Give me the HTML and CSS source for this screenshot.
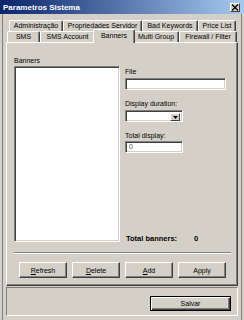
FILE: index.html
```html
<!DOCTYPE html>
<html>
<head>
    <title>Parametros Sistema</title>
    <link rel="stylesheet" href="styles.css">
</head>
<body>
    <div class="titlebar">
        <span class="title">Parametros Sistema</span>
        <span class="close">
            <svg width="8" height="7" viewBox="0 0 8 7"><path d="M1 0.5 L7 6.5 M7 0.5 L1 6.5" stroke="#000" stroke-width="1.3"/></svg>
        </span>
    </div>
    <div class="frame">
        <div class="tabrow back">
            <div class="tab" style="width:54px">Administração</div>
            <div class="tab" style="width:79px">Propriedades Servidor</div>
            <div class="tab" style="width:56px">Bad Keywords</div>
            <div class="tab" style="width:38px">Price List</div>
        </div>
        <div class="tabrow front">
            <div class="tab" style="width:33px">SMS</div>
            <div class="tab" style="width:55px">SMS Account</div>
            <div class="tab selected" style="width:42px">Banners</div>
            <div class="tab" style="width:46px">Multi Group</div>
            <div class="tab" style="width:58px">Firewall / Filter</div>
        </div>
        <div class="panel">
            <div class="panel-main">
                <div class="left-col">
                    <div class="lbl">Banners</div>
                    <div class="listbox"></div>
                </div>
                <div class="right-col">
                    <div class="lbl">File</div>
                    <div class="field wide"></div>
                    <div class="lbl gap">Display duration:</div>
                    <div class="combo">
                        <div class="combo-btn">
                            <svg width="5" height="3" viewBox="0 0 5 3"><path d="M0 0 H5 L2.5 3 Z" fill="#000"/></svg>
                        </div>
                    </div>
                    <div class="lbl gap">Total display:</div>
                    <div class="field short">0</div>
                    <div class="total">
                        <span class="total-lbl">Total banners:</span>
                        <span>0</span>
                    </div>
                </div>
            </div>
            <div class="separator"></div>
            <div class="buttons">
                <button><u>R</u>efresh</button>
                <button><u>D</u>elete</button>
                <button><u>A</u>dd</button>
                <button>Apply</button>
            </div>
        </div>
        <div class="footer">
            <button class="default">Salvar</button>
        </div>
    </div>
</body>
</html>
```

FILE: styles.css
```css
* {
    box-sizing: border-box;
}
body {
    margin: 0;
    width: 244px;
    height: 320px;
    overflow: hidden;
    background-color: #d4d0c8;
    font-family: "Liberation Sans", Arial, sans-serif;
    font-size: 7px;
    color: #000;
}

.titlebar {
    height: 14px;
    display: flex;
    align-items: center;
    justify-content: space-between;
    padding: 0 4px 0 3px;
    background: linear-gradient(to right, #0a246a, #a6caf0);
}
.title {
    color: #fff;
    font-weight: bold;
    font-size: 8px;
}
.close {
    display: flex;
    align-items: center;
    justify-content: center;
    width: 10px;
    height: 9px;
    background-color: #d4d0c8;
    border: 1px solid;
    border-color: #fff #404040 #404040 #fff;
}

.frame {
    margin: 0 2px;
    height: 306px;
    border-left: 1px solid #808080;
    border-right: 1px solid #808080;
    padding: 6px 3px 0 3px;
}

.tabrow {
    display: flex;
    align-items: flex-start;
    height: 11px;
}
.tabrow.back {
    padding-left: 3px;
}
.tabrow.front {
    padding-left: 1px;
}
.tab {
    height: 11px;
    line-height: 10px;
    text-align: center;
    white-space: nowrap;
    border-top: 1px solid #fff;
    border-left: 1px solid #fff;
    border-right: 1px solid #404040;
    border-radius: 2px 2px 0 0;
    box-shadow: inset -1px 0 #808080;
    background-color: #d4d0c8;
}
.tab.selected {
    position: relative;
    z-index: 1;
    height: 14px;
    margin: -2px -2px -1px -2px;
    line-height: 12px;
}

.panel {
    height: 244px;
    border: 1px solid;
    border-color: #fff #404040 #404040 #fff;
    box-shadow: inset -1px -1px #808080;
    padding: 13px 6px 7px 7px;
}
.panel-main {
    display: grid;
    grid-template-columns: 106px 1fr;
    gap: 5px;
}
.lbl {
    line-height: 10px;
    white-space: nowrap;
}
.lbl.gap {
    margin-top: 9px;
}
.listbox {
    height: 176px;
    background-color: #fff;
    border: 1px solid;
    border-color: #808080 #fff #fff #808080;
    box-shadow: inset 1px 1px #404040, inset -1px -1px #d4d0c8;
}
.right-col {
    display: flex;
    flex-direction: column;
    align-items: flex-start;
    padding-top: 11px;
}
.field, .combo {
    height: 12px;
    margin-top: 1px;
    background-color: #fff;
    border: 1px solid;
    border-color: #808080 #fff #fff #808080;
    box-shadow: inset 1px 1px #404040, inset -1px -1px #d4d0c8;
    padding: 0 3px;
    line-height: 10px;
    color: #555;
}
.field.wide {
    width: 101px;
}
.field.short {
    width: 58px;
    margin-top: 0;
}
.combo {
    width: 58px;
    display: flex;
    justify-content: flex-end;
    padding: 2px;
}
.combo-btn {
    width: 10px;
    height: 8px;
    display: flex;
    align-items: center;
    justify-content: center;
    background-color: #d4d0c8;
    border: 1px solid;
    border-color: #fff #404040 #404040 #fff;
}
.total {
    margin-top: auto;
    margin-bottom: -2px;
    display: flex;
    line-height: 10px;
    font-weight: bold;
    font-size: 7.5px;
    padding-left: 1px;
}
.total-lbl {
    width: 68px;
}

.separator {
    margin-top: 10px;
    height: 2px;
    border-top: 1px solid #808080;
    border-bottom: 1px solid #fff;
}
.buttons {
    display: flex;
    gap: 5px;
    margin-top: 8px;
    padding-left: 5px;
}
button {
    width: 48px;
    height: 16px;
    padding: 0;
    font-family: "Liberation Sans", Arial, sans-serif;
    font-size: 7px;
    color: #000;
    background-color: #d4d0c8;
    border: 1px solid;
    border-color: #fff #404040 #404040 #fff;
    box-shadow: inset -1px -1px #808080;
}

.footer {
    margin-top: 1px;
    height: 29px;
    border: 1px solid;
    border-color: #808080 #fff #fff #808080;
    display: flex;
    justify-content: flex-end;
    padding: 8px 6px 0 0;
}
button.default {
    width: 81px;
    height: 15px;
    border: 1px solid #000;
    box-shadow: inset 1px 1px #fff, inset -1px -1px #404040, inset -2px -2px #808080;
}
```
